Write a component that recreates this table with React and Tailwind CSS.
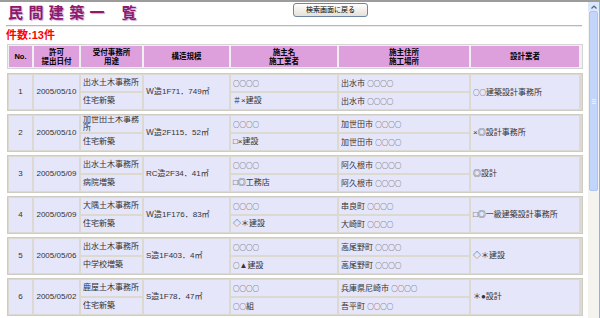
import React from 'react';

const records = [
  { no: 1, date: '2005/05/10', office: '出水土木事務所', use: '住宅新築', scale: 'Ｗ造1F71．749㎡', owner: '○○○○', builder: '＃×建設', addr: '出水市 ○○○○', site: '出水市 ○○○○', designer: '○○建築設計事務所' },
  { no: 2, date: '2005/05/10', office: '加世田土木事務所', use: '住宅新築', scale: 'Ｗ造2F115．52㎡', owner: '○○○○', builder: '□×建設', addr: '加世田市 ○○○○', site: '加世田市 ○○○○', designer: '×◎設計事務所' },
  { no: 3, date: '2005/05/09', office: '出水土木事務所', use: '病院増築', scale: 'RC造2F34．41㎡', owner: '○○○○', builder: '□◎工務店', addr: '阿久根市 ○○○○', site: '阿久根市 ○○○○', designer: '◎設計' },
  { no: 4, date: '2005/05/09', office: '大隅土木事務所', use: '住宅新築', scale: 'Ｗ造1F176．83㎡', owner: '○○○○', builder: '◇＊建設', addr: '串良町 ○○○○', site: '大崎町 ○○○○', designer: '□◎一級建築設計事務所' },
  { no: 5, date: '2005/05/06', office: '出水土木事務所', use: '中学校増築', scale: 'S造1F403．4㎡', owner: '○○○○', builder: '○▲建設', addr: '高尾野町 ○○○○', site: '高尾野町 ○○○○', designer: '◇＊建設' },
  { no: 6, date: '2005/05/02', office: '鹿屋土木事務所', use: '住宅新築', scale: 'S造1F78．47㎡', owner: '○○○○', builder: '○○組', addr: '兵庫県尼崎市 ○○○○', site: '吾平町 ○○○○', designer: '＊●設計' },
];

const cols = 'grid-cols-[23px_45px_61px_85px_106px_130px_108px]';
const cjk = { fontFamily: '"Noto Sans CJK JP", sans-serif' };

// circles look bigger in the original, give them the CJK glyph at a smaller size
const Txt = ({ text }) =>
  String(text)
    .split(/(○+)/)
    .map((part, i) =>
      part.startsWith('○') ? (
        <span key={i} style={cjk} className="text-[6.5px]">
          {part}
        </span>
      ) : (
        <React.Fragment key={i}>{part}</React.Fragment>
      )
    );

const HeadCell = ({ children }) => (
  <div className="bg-[#dda0dd] flex items-center justify-center text-center font-bold text-[7.5px] leading-[9px] text-black">
    {children}
  </div>
);

const Cell = ({ children, span, center }) => (
  <div
    className={`bg-[#e6e6fa] flex items-center overflow-hidden ${span ? 'row-span-2' : ''} ${
      center ? 'justify-center' : 'pl-[2px]'
    }`}
  >
    <span>
      <Txt text={children} />
    </span>
  </div>
);

const Record = ({ r }) => (
  <div className={`grid ${cols} grid-rows-[16px_16px] gap-[2px] p-px border border-[#cfccc4] bg-[#dcd9d1] text-[8px] leading-[8px] text-[#333]`}>
    <Cell span center>{r.no}</Cell>
    <Cell span center>{r.date}</Cell>
    <Cell>{r.office}</Cell>
    <Cell span>{r.scale}</Cell>
    <Cell>{r.owner}</Cell>
    <Cell>{r.addr}</Cell>
    <Cell span>{r.designer}</Cell>
    <Cell>{r.use}</Cell>
    <Cell>{r.builder}</Cell>
    <Cell>{r.site}</Cell>
  </div>
);

export default function App() {
  return (
    <div
      className="w-[600px] h-[318px] overflow-hidden bg-white flex flex-col"
      style={{ fontFamily: '"Liberation Sans", "Noto Sans CJK JP", sans-serif' }}
    >
      <div className="h-[2px] bg-[#9c9c9c]" />
      <div className="flex flex-1 min-h-0">
        {/* page */}
        <div className="flex-1 flex flex-col">
          <div className="flex items-start">
            <h1
              className="ml-[8px] w-[140px] text-[15px] leading-[20px] font-bold tracking-[1px] text-[#8e1a6a] [text-shadow:1px_1px_1px_#c4a6dc]"
              style={cjk}
            >
              民 間 建 築 一　覧
            </h1>
            <button className="ml-[145px] mt-px w-[75px] h-[14px] border border-[#6f86a3] rounded-[3px] bg-linear-to-b from-white to-[#e4e1d6] text-[7px] leading-[12px] text-black">
              検索画面に戻る
            </button>
          </div>
          <div className="mt-[3px] ml-[6px] w-[576px] border-t border-t-[#b8b8b8] border-b border-b-[#ececec]" />
          <div className="mt-[2px] ml-[6px] text-[11px] leading-[13px] font-bold text-[#ff0000]">件数:13件</div>

          <div className="ml-[7px] mt-[2px] w-[576px]">
            <div className={`grid ${cols} h-[25px] gap-[2px] p-px border border-[#d4d4d4] bg-[#f0f0f0]`}>
              <HeadCell>No.</HeadCell>
              <HeadCell>許可<br />提出日付</HeadCell>
              <HeadCell>受付事務所<br />用途</HeadCell>
              <HeadCell>構造規模</HeadCell>
              <HeadCell>施主名<br />施工業者</HeadCell>
              <HeadCell>施主住所<br />施工場所</HeadCell>
              <HeadCell>設計業者</HeadCell>
            </div>
            <div className="mt-[4px] flex flex-col gap-[3px]">
              {records.map((r) => (
                <Record key={r.no} r={r} />
              ))}
            </div>
          </div>
        </div>

        {/* scrollbar */}
        <div className="w-[12px] flex flex-col bg-[#f4f3ee] border-r border-r-[#8fb0dd]">
          <div className="h-[9px] flex items-center justify-center bg-[#dce7fb]">
            <svg width="6" height="4" viewBox="0 0 6 4">
              <path d="M0.5 3.5 L3 1 L5.5 3.5" fill="none" stroke="#4d6185" strokeWidth="1.2" />
            </svg>
          </div>
          <div className="h-[180px] mx-px rounded-[2px] bg-[#c4d5fb] border border-[#aec4f2] flex items-center justify-center">
            <div className="flex flex-col gap-px">
              <div className="w-[4px] h-px bg-[#e8f0ff]" />
              <div className="w-[4px] h-px bg-[#e8f0ff]" />
              <div className="w-[4px] h-px bg-[#e8f0ff]" />
            </div>
          </div>
          <div className="flex-1" />
        </div>
      </div>
    </div>
  );
}
